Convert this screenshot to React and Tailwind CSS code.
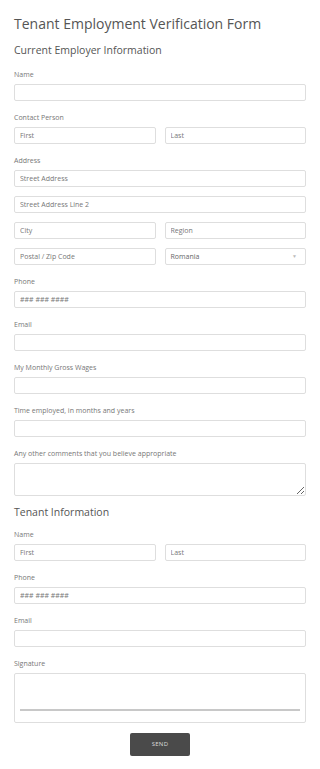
const font = { fontFamily: '"Open Sans", "Liberation Sans", sans-serif' };

const inputCls =
  "block w-full h-[17px] rounded-[2px] border border-[#dedede] bg-white px-[5px] text-[7px] text-[#555] placeholder:text-[#777] outline-none";

function Label({ children, className = "" }) {
  return <div className={`text-[7px] leading-[10px] text-[#777] ${className}`}>{children}</div>;
}

function Input({ placeholder = "" }) {
  return <input className={inputCls} placeholder={placeholder} />;
}

function Field({ label, children }) {
  return (
    <div className="mt-[12px]">
      <Label>{label}</Label>
      <div className="mt-[4px]">{children}</div>
    </div>
  );
}

function Pair({ a, b }) {
  return (
    <div className="grid grid-cols-2 gap-[9px]">
      <Input placeholder={a} />
      <Input placeholder={b} />
    </div>
  );
}

export default function App() {
  return (
    <div className="min-h-screen bg-white px-[14px] pt-[14px] pb-[14px]" style={font}>
      <h1 className="text-[14px] leading-[20px] text-[#555]">Tenant Employment Verification Form</h1>
      <h2 className="mt-[8px] text-[10.5px] leading-[16px] text-[#555]">Current Employer Information</h2>

      <div className="mt-[12px]">
        <Label>Name</Label>
        <div className="mt-[4px]">
          <Input />
        </div>
      </div>

      <Field label="Contact Person">
        <Pair a="First" b="Last" />
      </Field>

      <Field label="Address">
        <div className="flex flex-col gap-[9px]">
          <Input placeholder="Street Address" />
          <Input placeholder="Street Address Line 2" />
          <Pair a="City" b="Region" />
          <div className="grid grid-cols-2 gap-[9px]">
            <Input placeholder="Postal / Zip Code" />
            <div className="flex h-[17px] items-center justify-between rounded-[2px] border border-[#dedede] bg-white pl-[5px] pr-[8px] text-[7px] leading-[15px] text-[#666]">
              <span>Romania</span>
              <span className="text-[5px] text-[#bbb]">▼</span>
            </div>
          </div>
        </div>
      </Field>

      <Field label="Phone">
        <Input placeholder="### ### ####" />
      </Field>
      <Field label="Email">
        <Input />
      </Field>
      <Field label="My Monthly Gross Wages">
        <Input />
      </Field>
      <Field label="Time employed, in months and years">
        <Input />
      </Field>
      <Field label="Any other comments that you believe appropriate">
        <textarea className="block h-[33px] w-full rounded-[2px] border border-[#dedede] bg-white text-[7px] outline-none" />
      </Field>

      <h2 className="mt-[8px] text-[10.5px] leading-[16px] text-[#555]">Tenant Information</h2>

      <div className="mt-[10px]">
        <Label>Name</Label>
        <div className="mt-[4px]">
          <Pair a="First" b="Last" />
        </div>
      </div>
      <Field label="Phone">
        <Input placeholder="### ### ####" />
      </Field>
      <Field label="Email">
        <Input />
      </Field>
      <Field label="Signature">
        <div className="h-[50px] rounded-[2px] border border-[#dedede] bg-white px-[5px] pt-[35px]">
          <div className="h-[2px] bg-[#c8c8c8]" />
        </div>
      </Field>

      <div className="mt-[10px] flex justify-center">
        <button className="h-[23px] w-[60px] rounded-[2px] bg-[#4a4a4a] text-[6px] tracking-[0.3px] text-[#ddd]">
          SEND
        </button>
      </div>
    </div>
  );
}
